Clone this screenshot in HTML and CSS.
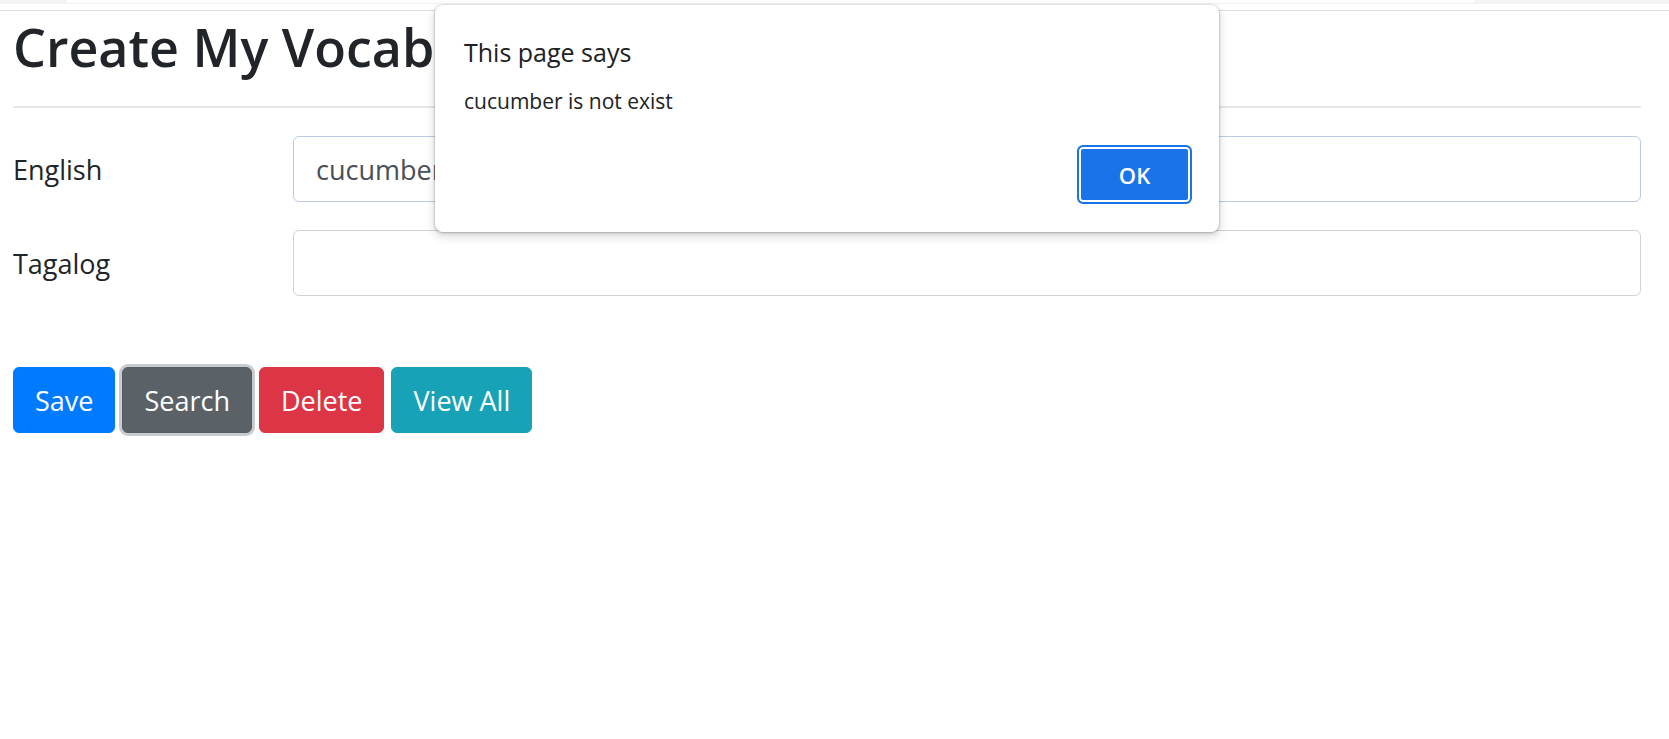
FILE: index.html
```html
<!DOCTYPE html>
<html lang="en">
<head>
<meta charset="utf-8">
<title>Create My Vocabulary</title>
<link rel="stylesheet" href="styles.css">
</head>
<body>
<div class="chrome">
  <div class="chrome-band"><div class="omnibox"></div></div>
</div>
<main class="page">
  <h1 class="title">Create My Vocabulary</h1>
  <hr class="rule">
  <form class="vocab-form">
    <div class="form-row">
      <label class="form-label" for="english">English</label>
      <input class="form-input form-input-active" id="english" type="text" value="cucumber">
    </div>
    <div class="form-row">
      <label class="form-label" for="tagalog">Tagalog</label>
      <input class="form-input" id="tagalog" type="text" value="">
    </div>
    <div class="actions">
      <button type="button" class="btn btn-primary">Save</button>
      <button type="button" class="btn btn-secondary btn-focus">Search</button>
      <button type="button" class="btn btn-danger">Delete</button>
      <button type="button" class="btn btn-info">View All</button>
    </div>
  </form>
</main>
<div class="alert-dialog" role="alertdialog">
  <div class="alert-title">This page says</div>
  <div class="alert-message">cucumber is not exist</div>
  <div class="alert-footer">
    <button type="button" class="alert-ok">OK</button>
  </div>
</div>
</body>
</html>
```
FILE: styles.css
```css
html, body {
  margin: 0;
  padding: 0;
  background: #fff;
}
body {
  font-family: "Open Sans", "Noto Sans", "Liberation Sans", sans-serif;
  color: #212529;
  width: 1669px;
  height: 739px;
  overflow: hidden;
  position: relative;
}
.chrome {
  height: 10px;
  border-bottom: 1px solid #dedede;
  background: #fff;
}
.chrome-band {
  height: 4px;
  background: #f3f3f3;
  display: flex;
}
.omnibox {
  margin-left: 66px;
  width: 1408px;
  height: 3px;
  background: #fff;
  border-radius: 0 0 6px 6px;
}
.page {
  padding: 0 28px 0 13px;
}
.title {
  margin: 3px 0 0 0;
  font-size: 52px;
  line-height: 65px;
  font-weight: 600;
  color: #212529;
  white-space: nowrap;
}
.rule {
  margin: 27px 0 0 0;
  border: 0;
  border-top: 2px solid #e6e6e6;
}
.vocab-form {
  margin-top: 28px;
  display: flex;
  flex-direction: column;
}
.form-row {
  display: grid;
  grid-template-columns: 280px 1fr;
  align-items: center;
  margin-bottom: 28px;
}
.form-label {
  font-size: 27px;
  line-height: 40px;
  color: #212529;
  padding-top: 2px;
}
.form-input {
  box-sizing: border-box;
  height: 66px;
  border: 1px solid #ced4da;
  border-radius: 6px;
  padding: 0 22px;
  font-family: "Open Sans", "Noto Sans", "Liberation Sans", sans-serif;
  font-size: 27px;
  color: #495057;
  background: #fff;
  outline: none;
}
.form-input-active {
  border-color: #bccbe0;
}
.actions {
  margin-top: 43px;
  display: flex;
  gap: 7px;
}
.btn {
  box-sizing: border-box;
  height: 66px;
  padding: 0 21px;
  border: 1px solid transparent;
  border-radius: 6px;
  font-family: "Open Sans", "Noto Sans", "Liberation Sans", sans-serif;
  font-size: 27px;
  color: #fff;
  cursor: pointer;
}
.btn-primary { background: #007bff; border-color: #007bff; }
.btn-secondary { background: #5a6268; border-color: #545b62; }
.btn-danger { background: #dc3545; border-color: #dc3545; }
.btn-info { background: #17a2b8; border-color: #17a2b8; }
.btn-focus {
  box-shadow: 0 0 0 3px #c9cccf;
}

.alert-dialog {
  position: absolute;
  left: 435px;
  top: 5px;
  width: 784px;
  height: 227px;
  box-sizing: border-box;
  padding: 31px 27px 0 29px;
  background: #fff;
  border-radius: 8px;
  box-shadow: 0 0 0 1px rgba(0,0,0,0.06), 0 1px 3px rgba(60,64,67,0.3), 0 4px 8px 2px rgba(60,64,67,0.15);
  display: flex;
  flex-direction: column;
  color: #202124;
}
.alert-title {
  font-size: 25px;
  line-height: 33px;
}
.alert-message {
  margin-top: 18px;
  font-size: 21px;
  line-height: 29px;
}
.alert-footer {
  margin-top: 29px;
  display: flex;
  justify-content: flex-end;
}
.alert-ok {
  box-sizing: border-box;
  width: 115px;
  height: 59px;
  background: #1a73e8;
  border: 2px solid #1a73e8;
  box-shadow: inset 0 0 0 2px #fff;
  border-radius: 6px;
  color: #fff;
  font-family: "Open Sans", "Noto Sans", "Liberation Sans", sans-serif;
  font-size: 22px;
  font-weight: 600;
  padding: 0;
}
```
